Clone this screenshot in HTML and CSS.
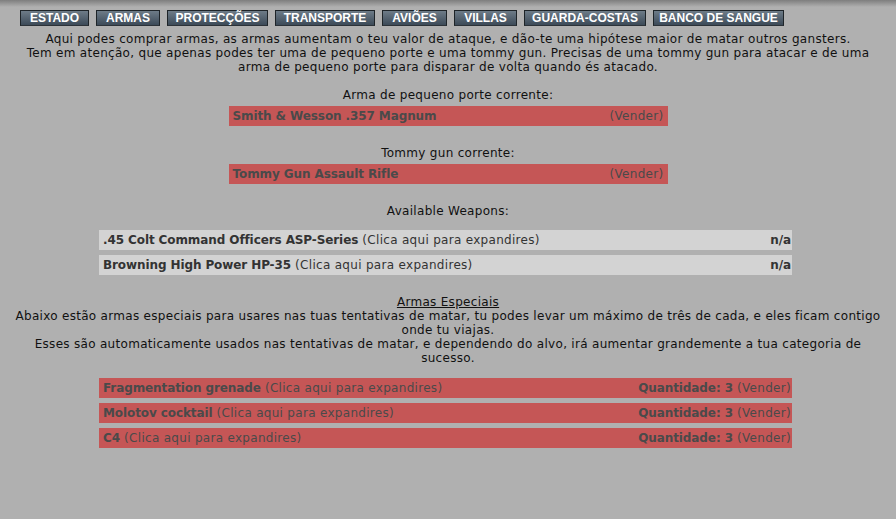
FILE: index.html
```html
<!DOCTYPE html>
<html lang="pt">
<head>
	<meta charset="UTF-8">
	<title>Armas</title>
	<link rel="stylesheet" href="styles.css">
</head>
<body>
	<ul class="tabs">
		<li>ESTADO</li>
		<li>ARMAS</li>
		<li>PROTECÇÕES</li>
		<li>TRANSPORTE</li>
		<li>AVIÕES</li>
		<li>VILLAS</li>
		<li>GUARDA-COSTAS</li>
		<li>BANCO DE SANGUE</li>
	</ul>

	<p class="intro">
		Aqui podes comprar armas, as armas aumentam o teu valor de ataque, e dão-te uma hipótese maior de matar outros gansters.<br>
		Tem em atenção, que apenas podes ter uma de pequeno porte e uma tommy gun. Precisas de uma tommy gun para atacar e de uma arma de pequeno porte para disparar de volta quando és atacado.
	</p>

	<div class="current">
		<div class="label">Arma de pequeno porte corrente:</div>
		<div class="bar red"><b>Smith &amp; Wesson .357 Magnum</b><span>(Vender)</span></div>
	</div>

	<div class="current">
		<div class="label">Tommy gun corrente:</div>
		<div class="bar red"><b>Tommy Gun Assault Rifle</b><span>(Vender)</span></div>
	</div>

	<div class="label available">Available Weapons:</div>
	<ul class="list">
		<li class="row grey"><span><b>.45 Colt Command Officers ASP-Series</b> (Clica aqui para expandires)</span><b>n/a</b></li>
		<li class="row grey"><span><b>Browning High Power HP-35</b> (Clica aqui para expandires)</span><b>n/a</b></li>
	</ul>

	<div class="special">
		<u>Armas Especiais</u><br>
		Abaixo estão armas especiais para usares nas tuas tentativas de matar, tu podes levar um máximo de três de cada, e eles ficam contigo onde tu viajas.<br>
		Esses são automaticamente usados nas tentativas de matar, e dependendo do alvo, irá aumentar grandemente a tua categoria de sucesso.
	</div>
	<ul class="list">
		<li class="row red"><span><b>Fragmentation grenade</b> (Clica aqui para expandires)</span><span><b>Quantidade: 3</b> (Vender)</span></li>
		<li class="row red"><span><b>Molotov cocktail</b> (Clica aqui para expandires)</span><span><b>Quantidade: 3</b> (Vender)</span></li>
		<li class="row red"><span><b>C4</b> (Clica aqui para expandires)</span><span><b>Quantidade: 3</b> (Vender)</span></li>
	</ul>
</body>
</html>
```

FILE: styles.css
```css
ul,
li {
    margin: 0;
    padding: 0;
}

li {
    list-style: none;
}

body {
    margin: 0;
    min-height: 519px;
    background: #b0b0b0 linear-gradient(#7e7e7e, #b0b0b0 7px) no-repeat;
    font-family: "DejaVu Sans", Verdana, sans-serif;
    font-size: 12px;
    line-height: 14px;
    letter-spacing: 0.3px;
    color: #111;
}

b {
    letter-spacing: -0.1px;
}

.tabs {
    display: flex;
    gap: 7px;
    padding: 10px 0 0 20px;
}

.tabs>li {
    box-sizing: border-box;
    height: 16px;
    border: 1px solid #1e2428;
    border-bottom-color: #2c3238;
    background: linear-gradient(#6e7c88, #3c4a58);
    color: #fff;
    font-family: "Liberation Sans", Arial, sans-serif;
    font-weight: bold;
    font-size: 12px;
    line-height: 14px;
    letter-spacing: 0;
    text-align: center;
    white-space: nowrap;
}

.tabs>li:nth-child(1) { width: 69px; }
.tabs>li:nth-child(2) { width: 64px; }
.tabs>li:nth-child(3) { width: 101px; }
.tabs>li:nth-child(4) { width: 100px; }
.tabs>li:nth-child(5) { width: 65px; }
.tabs>li:nth-child(6) { width: 63px; }
.tabs>li:nth-child(7) { width: 122px; }
.tabs>li:nth-child(8) { width: 131px; }

.intro {
    margin: 6px 20px 0;
    text-align: center;
}

.label {
    text-align: center;
}

.current {
    margin-top: 14px;
}

.current+.current {
    margin-top: 20px;
}

.bar {
    display: flex;
    justify-content: space-between;
    width: 431px;
    height: 20px;
    margin: 4px auto 0;
    padding: 0 4px;
    line-height: 20px;
    color: #4a4a4a;
}

.red {
    background: #c55656;
}

.grey {
    background: #d3d3d3;
    color: #333;
}

.available {
    margin-top: 20px;
}

.list {
    margin: 12px 0 0 99px;
    width: 693px;
}

.row {
    display: flex;
    justify-content: space-between;
    height: 20px;
    padding: 0 1px 0 4px;
    margin-bottom: 5px;
    line-height: 20px;
}

.row.red {
    color: #4a4a4a;
}

.special {
    margin: 20px 14px 0;
    text-align: center;
}

.special+.list {
    margin-top: 13px;
}
```
